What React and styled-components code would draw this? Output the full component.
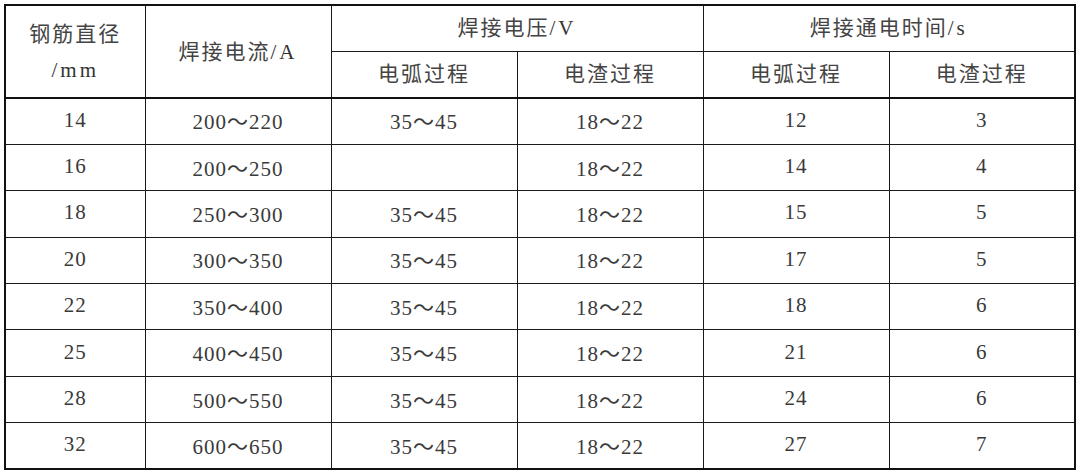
import React from 'react';
import styled, { createGlobalStyle } from 'styled-components';

const GlobalStyle = createGlobalStyle`
  html, body {
    margin: 0;
    padding: 0;
    background: #ffffff;
  }
`;

const Page = styled.div`
  width: 1080px;
  height: 475px;
  padding: 4px 0 0 4px;
  box-sizing: border-box;
  background: #fff;
`;

const Table = styled.table`
  width: 1070px;
  table-layout: fixed;
  border-collapse: collapse;
  border: 2px solid #111;
  font-family: "Liberation Serif", "Noto Sans CJK SC", serif;
  color: #333;
`;

const HeadRow = styled.tr`
  height: ${p => p.$h}px;
`;

const Row = styled.tr`
  height: 46.4px;
`;

const HeadCell = styled.th`
  font-weight: normal;
  font-size: 21px;
  letter-spacing: 2px;
  line-height: 36px;
  text-align: center;
  vertical-align: middle;
  padding: 0;
  border: 1px solid #1a1a1a;
  border-bottom: ${p => (p.$last ? '2px solid #111' : '1px solid #1a1a1a')};
  color: #444;
`;

const Unit = styled.span`
  font-family: "Liberation Serif", serif;
  letter-spacing: 3px;
  color: #333;
`;

const Cell = styled.td`
  font-size: 21px;
  letter-spacing: 1px;
  text-align: center;
  vertical-align: middle;
  padding: 0 0 2px;
  border: 1px solid #1a1a1a;
  color: #3a3a3a;
`;

const rows = [
  ['14', '200～220', '35～45', '18～22', '12', '3'],
  ['16', '200～250', '', '18～22', '14', '4'],
  ['18', '250～300', '35～45', '18～22', '15', '5'],
  ['20', '300～350', '35～45', '18～22', '17', '5'],
  ['22', '350～400', '35～45', '18～22', '18', '6'],
  ['25', '400～450', '35～45', '18～22', '21', '6'],
  ['28', '500～550', '35～45', '18～22', '24', '6'],
  ['32', '600～650', '35～45', '18～22', '27', '7'],
];

export default function App() {
  return (
    <Page>
      <GlobalStyle />
      <Table>
        <colgroup>
          <col style={{ width: 140 }} />
          <col style={{ width: 186 }} />
          <col style={{ width: 186 }} />
          <col style={{ width: 186 }} />
          <col style={{ width: 186 }} />
          <col style={{ width: 186 }} />
        </colgroup>
        <thead>
          <HeadRow $h={46}>
            <HeadCell rowSpan={2} $last>
              钢筋直径<br /><Unit>/mm</Unit>
            </HeadCell>
            <HeadCell rowSpan={2} $last>
              焊接电流<Unit>/A</Unit>
            </HeadCell>
            <HeadCell colSpan={2}>焊接电压<Unit>/V</Unit></HeadCell>
            <HeadCell colSpan={2}>焊接通电时间<Unit>/s</Unit></HeadCell>
          </HeadRow>
          <HeadRow $h={47}>
            <HeadCell $last>电弧过程</HeadCell>
            <HeadCell $last>电渣过程</HeadCell>
            <HeadCell $last>电弧过程</HeadCell>
            <HeadCell $last>电渣过程</HeadCell>
          </HeadRow>
        </thead>
        <tbody>
          {rows.map(r => (
            <Row key={r[0]}>
              {r.map((v, i) => (
                <Cell key={i}>{v}</Cell>
              ))}
            </Row>
          ))}
        </tbody>
      </Table>
    </Page>
  );
}
